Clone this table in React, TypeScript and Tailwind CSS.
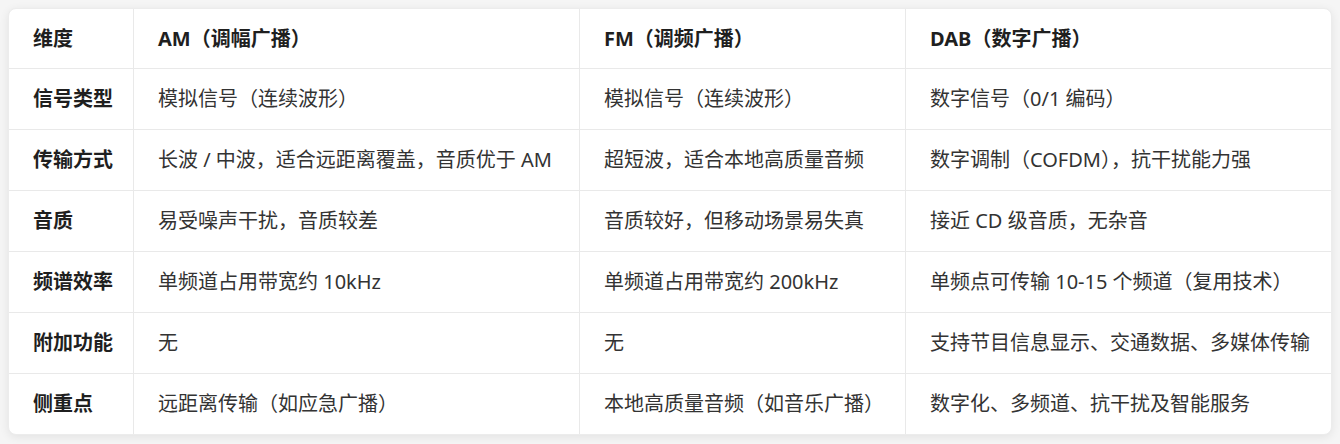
import React from 'react';

const header = ['维度', 'AM（调幅广播）', 'FM（调频广播）', 'DAB（数字广播）'];

const rows: string[][] = [
    ['信号类型', '模拟信号（连续波形）', '模拟信号（连续波形）', '数字信号（0/1 编码）'],
    ['传输方式', '长波 / 中波，适合远距离覆盖，音质优于 AM', '超短波，适合本地高质量音频', '数字调制（COFDM），抗干扰能力强'],
    ['音质', '易受噪声干扰，音质较差', '音质较好，但移动场景易失真', '接近 CD 级音质，无杂音'],
    ['频谱效率', '单频道占用带宽约 10kHz', '单频道占用带宽约 200kHz', '单频点可传输 10-15 个频道（复用技术）'],
    ['附加功能', '无', '无', '支持节目信息显示、交通数据、多媒体传输'],
    ['侧重点', '远距离传输（如应急广播）', '本地高质量音频（如音乐广播）', '数字化、多频道、抗干扰及智能服务'],
];

const cols = 'grid grid-cols-[124px_446px_326px_1fr]';

const App: React.FC = () => {
    return (
        <div
            className="w-[1340px] h-[444px] bg-[#f5f5f5] p-2"
            style={{ fontFamily: '"Noto Sans", "Noto Sans CJK SC", sans-serif' }}
        >
            <div className="bg-white rounded-lg border border-[#ececec] shadow-[0_2px_10px_rgba(0,0,0,0.08)] overflow-hidden">
                {/* Header */}
                <div className={`${cols} h-[59px]`}>
                    {header.map((h, i) => (
                        <div
                            key={h}
                            className={`flex items-center px-6 text-[20px] font-bold text-[#1f1f1f] ${i > 0 ? 'border-l border-[#e9e9e9]' : ''}`}
                        >
                            {h}
                        </div>
                    ))}
                </div>

                {/* Body */}
                {rows.map(r => (
                    <div key={r[0]} className={`${cols} h-[61px] border-t border-[#e9e9e9]`}>
                        {r.map((c, i) => (
                            <div
                                key={i}
                                className={`flex items-center px-6 text-[20px] whitespace-nowrap ${
                                    i === 0 ? 'font-bold text-[#1f1f1f]' : 'text-[#333333] border-l border-[#e9e9e9]'
                                }`}
                            >
                                {c}
                            </div>
                        ))}
                    </div>
                ))}
            </div>
        </div>
    );
};

export default App;
